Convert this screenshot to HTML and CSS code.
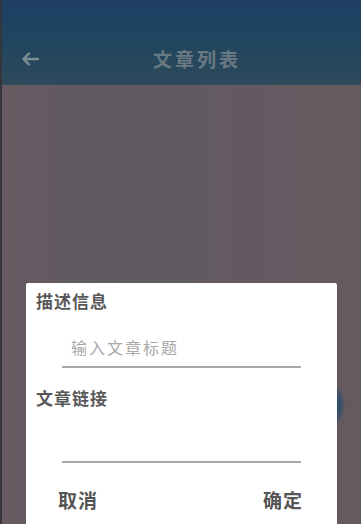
FILE: index.html
```html
<!DOCTYPE html>
<html lang="zh-CN">
<head>
    <meta charset="UTF-8">
    <meta name="viewport" content="width=device-width, initial-scale=1.0">
    <title>文章列表</title>
    <link rel="stylesheet" href="styles.css">
</head>
<body>
    <div class="screen">
        <div class="toolbar">
            <svg class="back" width="18" height="14" viewBox="0 0 18 14">
                <path d="M17 7H3M8 1.5L2.5 7L8 12.5" fill="none" stroke="#7d8d90" stroke-width="2.4" stroke-linecap="round" stroke-linejoin="round"/>
            </svg>
            <div class="title">文章列表</div>
        </div>
        <div class="content"></div>
        <div class="fab"></div>

        <div class="dialog">
            <div class="label">描述信息</div>
            <div class="field">
                <span class="placeholder">输入文章标题</span>
            </div>
            <div class="label label-link">文章链接</div>
            <div class="field field-empty"></div>
            <div class="actions">
                <span class="btn">取消</span>
                <span class="btn">确定</span>
            </div>
        </div>
    </div>
</body>
</html>
```

FILE: styles.css
```css
body {
    margin: 0;
    font-family: "Noto Sans CJK SC", "Noto Sans", sans-serif;
    background-color: #2e3036;
}

.screen {
    position: relative;
    width: 361px;
    height: 524px;
    overflow: hidden;
    border-left: 2px solid #34363c;
    box-sizing: border-box;
    display: flex;
    flex-direction: column;
    background-color: #645a60;
}

.toolbar {
    height: 85px;
    flex-shrink: 0;
    display: flex;
    align-items: center;
    padding-top: 32px;
    box-sizing: border-box;
    background: linear-gradient(to bottom, #1f3f64 0%, #1f4560 45%, #2e4a5b 100%);
}

.back {
    margin-left: 19px;
    flex-shrink: 0;
}

.title {
    margin-left: 114px;
    font-size: 19px;
    font-weight: bold;
    letter-spacing: 3px;
    color: #6a7a83;
}

.content {
    flex: 1;
    background: linear-gradient(to right, #675a61 0%, #5f5a62 28%, #635a62 60%, #655a5f 100%);
}

.fab {
    position: absolute;
    right: 18px;
    top: 378px;
    width: 54px;
    height: 54px;
    border-radius: 50%;
    background-color: #35506a;
    filter: blur(1.5px);
}

.dialog {
    position: absolute;
    left: 24px;
    top: 283px;
    width: 311px;
    height: 260px;
    background-color: #ffffff;
    border-radius: 2px;
    padding: 6px 10px 0 10px;
    box-sizing: border-box;
}

.label {
    font-size: 17px;
    font-weight: bold;
    line-height: 24px;
    color: #585858;
    letter-spacing: 1px;
}

.field {
    margin: 0 26px 0 26px;
    height: 55px;
    border-bottom: 2px solid #a8a8a8;
    display: flex;
    align-items: flex-end;
    padding: 0 0 7px 9px;
    box-sizing: border-box;
}

.placeholder {
    font-size: 16px;
    line-height: 24px;
    color: #a9a9a9;
    letter-spacing: 2px;
}

.label-link {
    margin-top: 18px;
}

.field-empty {
    height: 53px;
}

.actions {
    display: flex;
    justify-content: space-between;
    padding: 24px 24px 0 22px;
}

.btn {
    font-size: 19px;
    font-weight: bold;
    line-height: 26px;
    color: #555555;
    letter-spacing: 1px;
}
```
